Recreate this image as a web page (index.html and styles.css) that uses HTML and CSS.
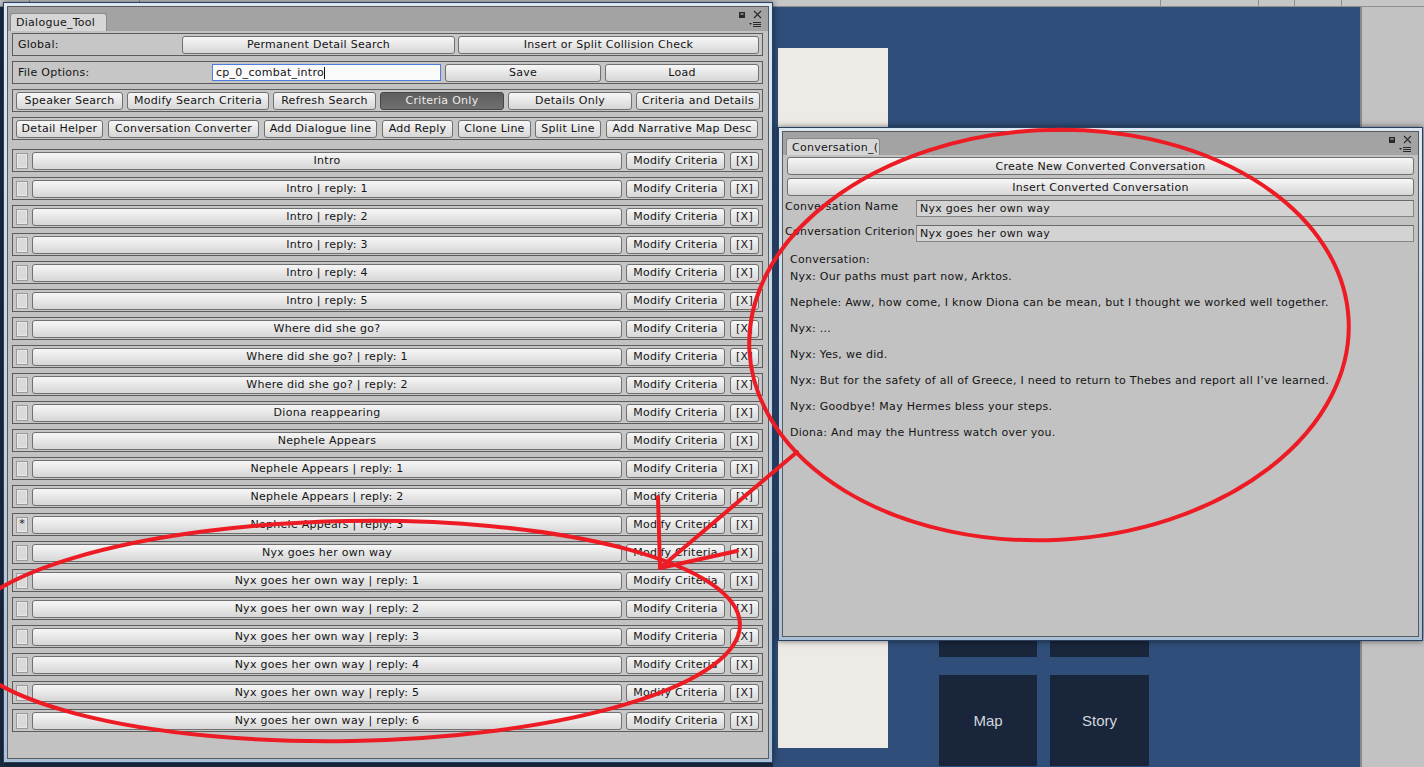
FILE: index.html
```html
<!DOCTYPE html>
<html lang="en">
<head>
  <meta charset="UTF-8" />
  <title>Dialogue_Tool</title>
  <link rel="stylesheet" href="styles.css">
</head>
<body>
  <div class="editor">
    <div class="editor-toolbar">
      <span class="tb-seg seg-a"></span>
      <span class="tb-seg seg-b"></span>
      <span class="tb-seg seg-c"></span>
      <span class="tb-seg seg-d"></span>
      <span class="tb-seg seg-e"></span>
      <span class="tb-seg seg-f"></span>
    </div>
    <div class="editor-main">
      <div class="scene-pane"></div>
      <div class="game-pane">
        <div class="game-sheet"></div>
        <div class="game-tiles">
          <div class="tile"></div>
          <div class="tile"></div>
          <div class="tile">Map</div>
          <div class="tile">Story</div>
        </div>
      </div>
      <div class="inspector-pane"></div>
    </div>
  </div>

  <!-- Dialogue tool window -->
  <section class="window dialogue-window">
    <div class="win-inner">
      <div class="win-tabs">
        <div class="win-tab tab-dialogue">Dialogue_Tool</div>
        <div class="win-icons">
          <svg class="icons-top" width="30" height="9" viewBox="0 0 30 9">
            <rect x="5.5" y="2.5" width="5" height="5" fill="#2a2a2a" stroke="#2a2a2a" />
            <rect x="6.5" y="3.5" width="3" height="1" fill="#d0d0d0" />
            <path d="M20 1 L27 8 M27 1 L20 8" stroke="#2a2a2a" stroke-width="1.1" />
          </svg>
          <svg class="icons-menu" width="16" height="7" viewBox="0 0 16 7">
            <path d="M2 2 L5 2 L3.5 4 Z" fill="#2a2a2a" />
            <path d="M6 1.5 H14 M6 3.5 H14 M6 5.5 H14" stroke="#2a2a2a" stroke-width="1" />
          </svg>
        </div>
      </div>

      <div class="win-panel">
        <div class="box-row row-global">
          <span class="row-label">Global:</span>
          <button class="btn w-permanent">Permanent Detail Search</button>
          <button class="btn w-insert">Insert or Split Collision Check</button>
        </div>

        <div class="box-row row-file">
          <span class="row-label">File Options:</span>
          <div class="text-field focused w-file">cp_0_combat_intro<span class="caret"></span></div>
          <button class="btn w-save">Save</button>
          <button class="btn w-load">Load</button>
        </div>

        <div class="box-row row-tools">
          <button class="btn w-speaker">Speaker Search</button>
          <button class="btn w-modify-search">Modify Search Criteria</button>
          <button class="btn w-refresh">Refresh Search</button>
          <button class="btn btn-on w-view">Criteria Only</button>
          <button class="btn w-view">Details Only</button>
          <button class="btn w-view">Criteria and Details</button>
        </div>

        <div class="box-row row-tools">
          <button class="btn w-helper">Detail Helper</button>
          <button class="btn w-converter">Conversation Converter</button>
          <button class="btn w-add-line">Add Dialogue line</button>
          <button class="btn w-reply">Add Reply</button>
          <button class="btn w-clone">Clone Line</button>
          <button class="btn w-split">Split Line</button>
          <button class="btn w-narrative">Add Narrative Map Desc</button>
        </div>

        <div class="line-list">
          <div class="box-row line-row"><span class="toggle"></span><button class="btn line-btn">Intro</button><button class="btn w-criteria">Modify Criteria</button><button class="btn w-remove">[X]</button></div>
          <div class="box-row line-row"><span class="toggle"></span><button class="btn line-btn">Intro | reply: 1</button><button class="btn w-criteria">Modify Criteria</button><button class="btn w-remove">[X]</button></div>
          <div class="box-row line-row"><span class="toggle"></span><button class="btn line-btn">Intro | reply: 2</button><button class="btn w-criteria">Modify Criteria</button><button class="btn w-remove">[X]</button></div>
          <div class="box-row line-row"><span class="toggle"></span><button class="btn line-btn">Intro | reply: 3</button><button class="btn w-criteria">Modify Criteria</button><button class="btn w-remove">[X]</button></div>
          <div class="box-row line-row"><span class="toggle"></span><button class="btn line-btn">Intro | reply: 4</button><button class="btn w-criteria">Modify Criteria</button><button class="btn w-remove">[X]</button></div>
          <div class="box-row line-row"><span class="toggle"></span><button class="btn line-btn">Intro | reply: 5</button><button class="btn w-criteria">Modify Criteria</button><button class="btn w-remove">[X]</button></div>
          <div class="box-row line-row"><span class="toggle"></span><button class="btn line-btn">Where did she go?</button><button class="btn w-criteria">Modify Criteria</button><button class="btn w-remove">[X]</button></div>
          <div class="box-row line-row"><span class="toggle"></span><button class="btn line-btn">Where did she go? | reply: 1</button><button class="btn w-criteria">Modify Criteria</button><button class="btn w-remove">[X]</button></div>
          <div class="box-row line-row"><span class="toggle"></span><button class="btn line-btn">Where did she go? | reply: 2</button><button class="btn w-criteria">Modify Criteria</button><button class="btn w-remove">[X]</button></div>
          <div class="box-row line-row"><span class="toggle"></span><button class="btn line-btn">Diona reappearing</button><button class="btn w-criteria">Modify Criteria</button><button class="btn w-remove">[X]</button></div>
          <div class="box-row line-row"><span class="toggle"></span><button class="btn line-btn">Nephele Appears</button><button class="btn w-criteria">Modify Criteria</button><button class="btn w-remove">[X]</button></div>
          <div class="box-row line-row"><span class="toggle"></span><button class="btn line-btn">Nephele Appears | reply: 1</button><button class="btn w-criteria">Modify Criteria</button><button class="btn w-remove">[X]</button></div>
          <div class="box-row line-row"><span class="toggle"></span><button class="btn line-btn">Nephele Appears | reply: 2</button><button class="btn w-criteria">Modify Criteria</button><button class="btn w-remove">[X]</button></div>
          <div class="box-row line-row"><span class="toggle checked">*</span><button class="btn line-btn">Nephele Appears | reply: 3</button><button class="btn w-criteria">Modify Criteria</button><button class="btn w-remove">[X]</button></div>
          <div class="box-row line-row"><span class="toggle"></span><button class="btn line-btn">Nyx goes her own way</button><button class="btn w-criteria">Modify Criteria</button><button class="btn w-remove">[X]</button></div>
          <div class="box-row line-row"><span class="toggle"></span><button class="btn line-btn">Nyx goes her own way | reply: 1</button><button class="btn w-criteria">Modify Criteria</button><button class="btn w-remove">[X]</button></div>
          <div class="box-row line-row"><span class="toggle"></span><button class="btn line-btn">Nyx goes her own way | reply: 2</button><button class="btn w-criteria">Modify Criteria</button><button class="btn w-remove">[X]</button></div>
          <div class="box-row line-row"><span class="toggle"></span><button class="btn line-btn">Nyx goes her own way | reply: 3</button><button class="btn w-criteria">Modify Criteria</button><button class="btn w-remove">[X]</button></div>
          <div class="box-row line-row"><span class="toggle"></span><button class="btn line-btn">Nyx goes her own way | reply: 4</button><button class="btn w-criteria">Modify Criteria</button><button class="btn w-remove">[X]</button></div>
          <div class="box-row line-row"><span class="toggle"></span><button class="btn line-btn">Nyx goes her own way | reply: 5</button><button class="btn w-criteria">Modify Criteria</button><button class="btn w-remove">[X]</button></div>
          <div class="box-row line-row"><span class="toggle"></span><button class="btn line-btn">Nyx goes her own way | reply: 6</button><button class="btn w-criteria">Modify Criteria</button><button class="btn w-remove">[X]</button></div>
        </div>
      </div>
    </div>
  </section>

  <!-- Conversation converter window -->
  <section class="window conversation-window">
    <div class="win-inner">
      <div class="win-tabs">
        <div class="win-tab tab-conversation">Conversation_(</div>
        <div class="win-icons">
          <svg class="icons-top" width="30" height="9" viewBox="0 0 30 9">
            <rect x="5.5" y="2.5" width="5" height="5" fill="#2a2a2a" stroke="#2a2a2a" />
            <rect x="6.5" y="3.5" width="3" height="1" fill="#d0d0d0" />
            <path d="M20 1 L27 8 M27 1 L20 8" stroke="#2a2a2a" stroke-width="1.1" />
          </svg>
          <svg class="icons-menu" width="16" height="7" viewBox="0 0 16 7">
            <path d="M2 2 L5 2 L3.5 4 Z" fill="#2a2a2a" />
            <path d="M6 1.5 H14 M6 3.5 H14 M6 5.5 H14" stroke="#2a2a2a" stroke-width="1" />
          </svg>
        </div>
      </div>

      <div class="win-panel conv-panel">
        <button class="btn btn-wide">Create New Converted Conversation</button>
        <button class="btn btn-wide">Insert Converted Conversation</button>

        <div class="field-row">
          <span class="field-label">Conversation Name</span>
          <div class="text-field conv-field">Nyx goes her own way</div>
        </div>
        <div class="field-row">
          <span class="field-label">Conversation Criterion</span>
          <div class="text-field conv-field">Nyx goes her own way</div>
        </div>

        <div class="conv-label">Conversation:</div>
        <div class="conv-text">
          <p>Nyx: Our paths must part now, Arktos.</p>
          <p>Nephele: Aww, how come, I know Diona can be mean, but I thought we worked well together.</p>
          <p>Nyx: ...</p>
          <p>Nyx: Yes, we did.</p>
          <p>Nyx: But for the safety of all of Greece, I need to return to Thebes and report all I’ve learned.</p>
          <p>Nyx: Goodbye! May Hermes bless your steps.</p>
          <p>Diona: And may the Huntress watch over you.</p>
        </div>
      </div>
    </div>
  </section>

  <!-- hand-drawn markup on top -->
  <svg class="markup" width="1424" height="767" viewBox="0 0 1424 767">
    <g fill="none" stroke="#ed1c24" stroke-width="4" stroke-linecap="round">
      <ellipse cx="1049" cy="335" rx="300" ry="205" transform="rotate(-3 1049 335)" />
      <ellipse cx="350" cy="631" rx="390" ry="110" transform="rotate(-1 350 631)" />
      <path d="M797 452 L660 568" />
      <path d="M658 497 L660 568" />
      <path d="M737 551 L660 568" />
    </g>
  </svg>
</body>
</html>
```

FILE: styles.css
```css
* {
  box-sizing: border-box;
}

body {
  margin: 0;
  width: 1424px;
  height: 767px;
  overflow: hidden;
  position: relative;
  font-family: 'DejaVu Sans', sans-serif;
  font-size: 11px;
  letter-spacing: 0.27px;
  color: #141414;
  background: #1c2b42;
}

/* editor behind the windows */
.editor {
  display: flex;
  flex-direction: column;
  height: 767px;
}

.editor-toolbar {
  height: 7px;
  display: flex;
  background: #c6c6c6;
  border-bottom: 1px solid #8e8e8e;
}

.tb-seg {
  border-right: 1px solid #8e8e8e;
}
.seg-a { width: 30px; }
.seg-b { width: 110px; }
.seg-c { width: 1021px; }
.seg-d { width: 98px; }
.seg-e { width: 36px; }
.seg-f { width: 47px; }

.editor-main {
  flex: 1;
  display: flex;
}

.scene-pane {
  width: 773px;
  background: #1c2b42;
}

.game-pane {
  width: 587px;
  display: flex;
  align-items: flex-start;
  background: #2f4e79;
}

.game-sheet {
  width: 110px;
  height: 700px;
  margin: 41px 0 0 5px;
  background: #eeebe6;
}

.game-tiles {
  margin: 559px 0 0 51px;
  display: grid;
  grid-template-columns: 98px 99px;
  grid-auto-rows: 91px;
  column-gap: 13px;
  row-gap: 18px;
}

.tile {
  display: flex;
  align-items: center;
  justify-content: center;
  background: #18253b;
  color: #d3d6dc;
  font-family: 'Liberation Sans', Arial, sans-serif;
  font-size: 15px;
  letter-spacing: 0;
}

.inspector-pane {
  flex: 1;
  background: #c2c2c2;
  border-left: 2px solid #8a8a8a;
}

/* floating editor windows */
.window {
  position: absolute;
  padding: 3px;
  border: 1px solid #2a4060;
  background: linear-gradient(#dbe7f3, #aac0d7);
  box-shadow: 0 0 6px rgba(0, 0, 0, 0.55);
}

.dialogue-window {
  left: 3px;
  top: 2px;
  width: 770px;
  height: 761px;
}

.conversation-window {
  left: 778px;
  top: 127px;
  width: 645px;
  height: 514px;
}

.win-inner {
  height: 100%;
  display: flex;
  flex-direction: column;
  border: 1px solid #5a5a5a;
  background: #a3a3a3;
}

.win-tabs {
  display: flex;
  align-items: flex-end;
  padding-left: 2px;
}

.dialogue-window .win-tabs {
  height: 24px;
}

.conversation-window .win-tabs {
  height: 23px;
}

.win-tab {
  height: 18px;
  padding: 2px 0 0 5px;
  background: #d6d6d6;
  border: 1px solid #888;
  border-bottom: none;
  border-radius: 3px 3px 0 0;
  white-space: nowrap;
  overflow: hidden;
}

.tab-dialogue {
  width: 97px;
}

.tab-conversation {
  width: 94px;
  height: 17px;
  margin-left: 1px;
}

.win-icons {
  margin-left: auto;
  align-self: stretch;
  display: flex;
  flex-direction: column;
  align-items: flex-end;
  padding: 3px 4px 0 0;
}

.icons-menu {
  margin-top: 2px;
  margin-right: 1px;
}

.win-panel {
  flex: 1;
  padding: 2px 5px 0 4px;
  background: #c2c2c2;
}

/* Unity style boxes and buttons */
.box-row {
  height: 23px;
  margin-bottom: 5px;
  padding: 0 3px;
  display: flex;
  align-items: center;
  gap: 4px;
  border: 1px solid #5c5c5c;
  background: #c6c6c6;
}

.row-label {
  padding-left: 2px;
}

.row-global .row-label {
  width: 168px;
}

.row-file .row-label {
  width: 192px;
}

.btn {
  height: 18px;
  padding: 0;
  flex: none;
  display: flex;
  align-items: center;
  justify-content: center;
  font: inherit;
  letter-spacing: inherit;
  color: #141414;
  white-space: nowrap;
  border: 1px solid #707070;
  border-radius: 3px;
  background: linear-gradient(#f7f7f7, #d6d6d6);
}

.btn-on {
  color: #ececec;
  border-color: #474747;
  background: linear-gradient(#5e5e5e, #707070);
}

.w-permanent { width: 273px; }
.w-insert { width: 301px; margin-left: -1px; }
.w-file { width: 229px; }
.w-save { width: 156px; }
.w-load { width: 154px; }

.w-speaker { width: 107px; }
.w-modify-search { width: 142px; }
.w-refresh { width: 103px; }
.w-view { width: 124px; }

.w-helper { width: 87px; }
.w-converter { width: 151px; margin-left: 1px; }
.w-add-line { width: 113px; margin-left: 1px; }
.w-reply { width: 71px; margin-left: 1px; }
.w-clone { width: 73px; margin-left: 1px; }
.w-split { width: 66px; }
.w-narrative { width: 152px; margin-left: 1px; }

.text-field {
  height: 17px;
  padding: 0 0 0 3px;
  display: flex;
  align-items: center;
  white-space: nowrap;
  border: 1px solid #858585;
  border-top-color: #6a6a6a;
  background: #d3d3d3;
}

.text-field.focused {
  border-color: #4c7de0;
  background: #fafafa;
}

.caret {
  width: 1px;
  height: 12px;
  background: #111;
}

/* dialogue line list */
.line-list {
  padding-top: 4px;
}

.toggle {
  width: 12px;
  height: 16px;
  display: flex;
  justify-content: center;
  font-size: 11px;
  line-height: 12px;
  letter-spacing: 0;
  border: 1px solid #9a9a9a;
  background: #dadada;
  box-shadow: inset 0 0 0 1px #e8e8e8;
}

.line-btn {
  flex: 1;
}

.w-criteria { width: 99px; }
.w-remove { width: 29px; margin-left: 1px; }

/* conversation converter */
.conv-panel {
  padding: 2px 4px 0 4px;
}

.btn-wide {
  width: 100%;
  margin-bottom: 3px;
}

.field-row {
  display: flex;
  align-items: flex-start;
  margin-top: 4px;
}

.field-row + .field-row {
  margin-top: 8px;
}

.field-label {
  width: 131px;
  margin-left: -2px;
  margin-top: 0;
  white-space: nowrap;
}

.conv-field {
  flex: 1;
}

.conv-label {
  margin: 11px 0 0 3px;
  line-height: 13px;
}

.conv-text {
  margin: 4px 0 0 3px;
}

.conv-text p {
  margin: 0 0 13px;
  line-height: 13px;
}

/* red pen markup */
.markup {
  position: absolute;
  left: 0;
  top: 0;
  pointer-events: none;
}
```
